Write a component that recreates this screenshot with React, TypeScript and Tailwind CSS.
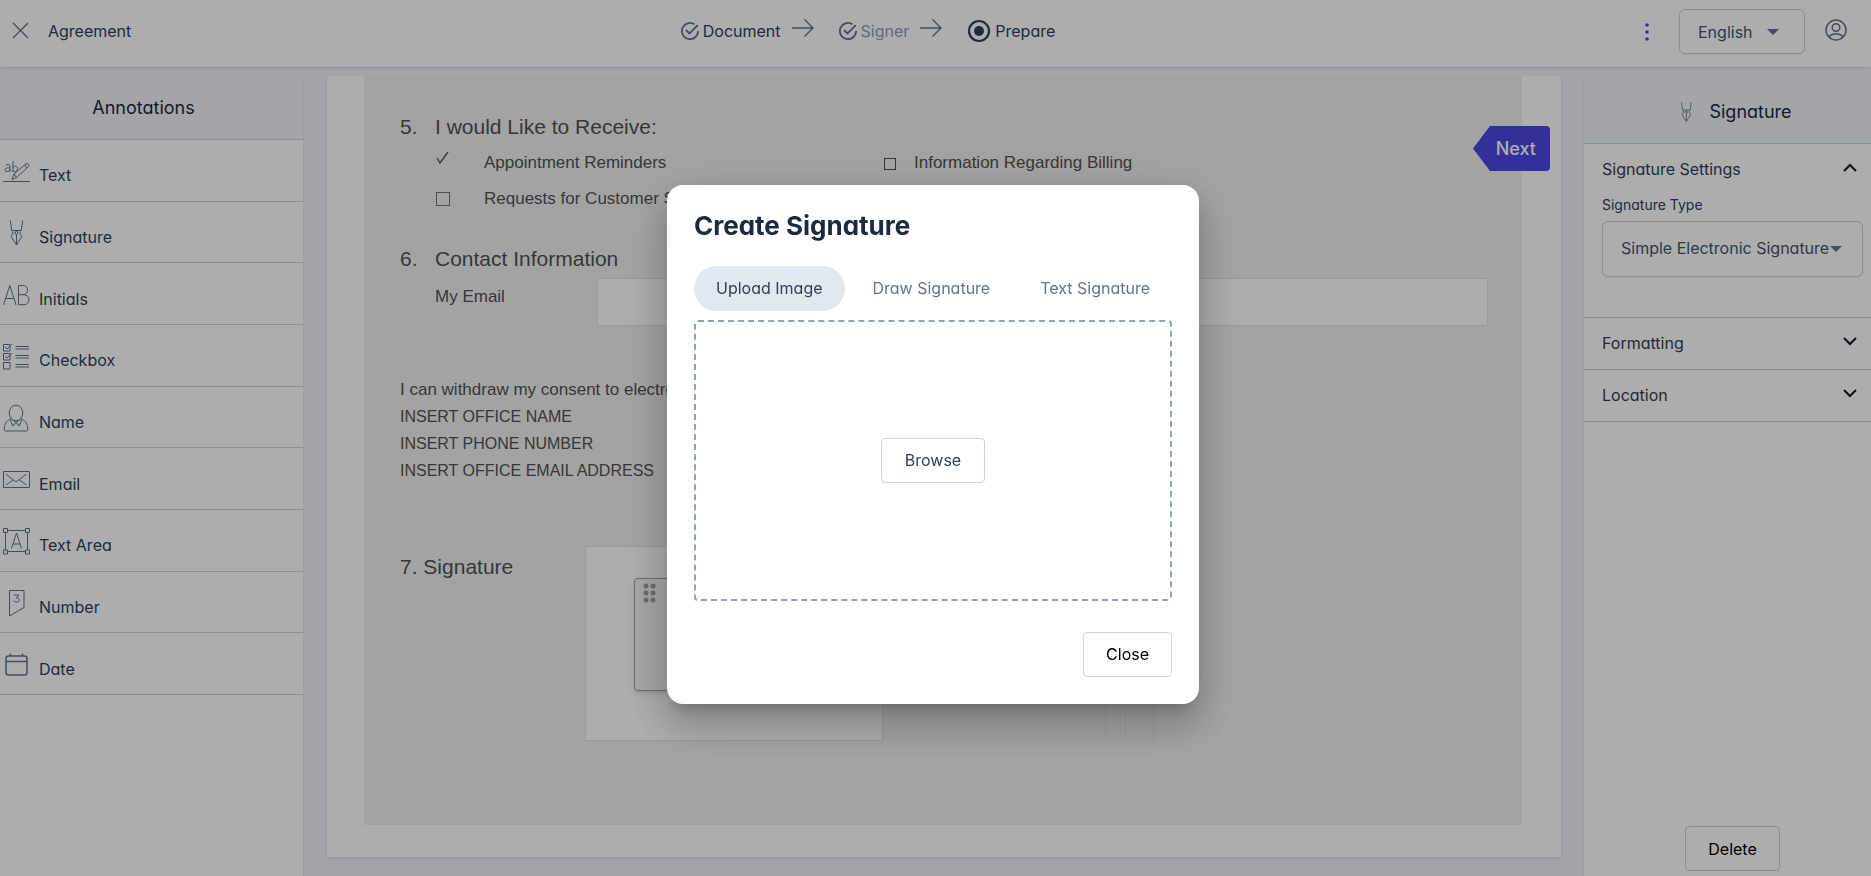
import React from 'react';

type IconProps = { className?: string };

const Svg = ({ className, size = 28, children }: { className?: string; size?: number; children: React.ReactNode }) => (
  <svg
    className={className}
    width={size}
    height={size}
    viewBox="0 0 28 28"
    fill="none"
    stroke="currentColor"
    strokeWidth="1"
    aria-hidden="true"
  >
    {children}
  </svg>
);

const TextIcon = () => (
  <Svg>
    <path d="M1 24.5H28" />
    <path d="M4 8q3-2 4 1v6M8 11c-4-.5-5.500 1-5 2.500s4 1.500 5-.5M11 4v11M11 10.500c2-2.500 5-1 4.500 1.800s-3.500 3.200-4.500 1" />
    <path d="M10 22.500l2-5.500L24 6.800c2-1 3.500 1 2.500 2.700L14.500 20.500zM12 17l2.500 3.500M22.500 8l2.500 3" />
  </Svg>
);

const NibIcon = ({ className, size }: IconProps & { size?: number }) => (
  <Svg className={className} size={size}>
    <path d="M8.300 1.500l1.400 10M20.700 1.500l-1.400 10M9.200 11.500h10.600" />
    <path d="M11 12.500c0 2-1 3.500-1.800 5l5.300 8.500 5.300-8.500c-.8-1.500-1.800-3-1.800-5M14.500 15.500v10.500" />
    <circle cx="14.500" cy="14" r="1.500" />
  </Svg>
);

const InitialsIcon = () => (
  <Svg>
    <path d="M1.500 24L7.800 4.500 14 24M3.800 17.500h8" />
    <path d="M16.500 4.500v19.200H22a5 5 0 0 0 0-10h-5.500M16.500 4.500H21a4.500 4.500 0 0 1 0 9.200" />
  </Svg>
);

const CheckboxIcon = () => (
  <Svg>
    <path d="M1.500 2.500h6.500v6.500H1.500zM1.500 11.500h6.500v6.500H1.500zM1.500 20.500h6.500v6.500H1.500z" />
    <path d="M3 5l2 2 5-5M3 14l2 2 5-5" />
    <path d="M13.500 4.500H27M13.500 7H27M13.500 13.500H27M13.500 16H27M13.500 22.500H27M13.500 25H27" />
  </Svg>
);

const NameIcon = () => (
  <Svg>
    <ellipse cx="14" cy="9" rx="6.800" ry="7.800" />
    <path d="M9.500 14.500C4 17 2.500 20 2.200 25c0 1.500 1 2 2.500 2h18.600c1.500 0 2.500-.5 2.500-2-.3-5-1.800-8-7.300-10.500" />
    <path d="M8 15.500l3 6.500 3-4 3 4 3-6.500M10 15.500l4 2.800 4-2.800" />
  </Svg>
);

const EmailIcon = () => (
  <Svg>
    <path d="M1.500 5.500h26v16h-26z" />
    <path d="M4 8l8.500 7q1.500 1 3 0L24.500 8M4 19l7-5M24.500 19l-7-5" />
  </Svg>
);

const TextAreaIcon = () => (
  <Svg>
    <path d="M6 3.500h17M6 24.500h17M3.500 6v17M25.500 6v17" />
    <path d="M1.500 1.500h4v4h-4zM23.500 1.500h4v4h-4zM1.500 23h4v4h-4zM23.500 23h4v4h-4z" />
    <path d="M9.500 21.500l5-15.500 5 15.500M11 17h7" />
  </Svg>
);

const NumberIcon = () => (
  <Svg>
    <path d="M7.500 1.500h14.500v17L7.500 27z" />
    <path d="M12 6h5l-2.800 3c4-.5 4 4 .5 4-1.500 0-2.500-.5-3-1.500" />
  </Svg>
);

const DateIcon = () => (
  <Svg>
    <rect x="4" y="5" width="21" height="19" rx="2.500" strokeWidth="1.500" />
    <path d="M4 10.500h21M8.500 2.500V5M20.500 2.500V5" strokeWidth="1.500" />
  </Svg>
);

const annotations = [
  { label: 'Text', Icon: TextIcon },
  { label: 'Signature', Icon: NibIcon },
  { label: 'Initials', Icon: InitialsIcon },
  { label: 'Checkbox', Icon: CheckboxIcon },
  { label: 'Name', Icon: NameIcon },
  { label: 'Email', Icon: EmailIcon },
  { label: 'Text Area', Icon: TextAreaIcon },
  { label: 'Number', Icon: NumberIcon },
  { label: 'Date', Icon: DateIcon },
];

const StepDone = () => (
  <svg width="18" height="18" viewBox="0 0 18 18" fill="none" stroke="currentColor" strokeWidth="1.800" className="text-slate-500" aria-hidden="true">
    <path d="M13.500 2.300A8.100 8.100 0 1 0 17.100 9" />
    <path d="M5 8l3.500 3.500L16.800 3.200" />
  </svg>
);

const StepArrow = () => (
  <svg width="24" height="20" viewBox="0 0 24 20" fill="none" stroke="currentColor" strokeWidth="1.400" className="mb-1.5 text-slate-500" aria-hidden="true">
    <path d="M1 10h21M13.500 1.500L22 10l-8.500 8.500" />
  </svg>
);

const StepCurrent = () => (
  <svg width="24" height="24" viewBox="0 0 24 24" fill="none" className="text-slate-700" aria-hidden="true">
    <circle cx="12" cy="12" r="10" stroke="currentColor" strokeWidth="2.200" />
    <circle cx="12" cy="12" r="5" fill="currentColor" />
  </svg>
);

const Caret = ({ className }: IconProps) => (
  <svg width="12" height="6" viewBox="0 0 12 6" className={className} aria-hidden="true">
    <path d="M0 0h12L6 6z" fill="currentColor" />
  </svg>
);

const Chevron = ({ open }: { open?: boolean }) => (
  <svg width="14" height="10" viewBox="0 0 14 10" fill="none" stroke="currentColor" strokeWidth="2" className="mb-1 text-slate-900" aria-hidden="true">
    <path d={open ? 'M1 8l6-6 6 6' : 'M1 2l6 6 6-6'} />
  </svg>
);

function Header() {
  return (
    <header className="relative z-10 grid h-[67px] shrink-0 grid-cols-[1fr_auto_1fr] items-center bg-white pb-1 shadow">
      <div className="flex items-center pb-0.5 pl-3">
        <button type="button" aria-label="Close document" className="text-slate-500">
          <svg width="17" height="17" viewBox="0 0 17 17" fill="none" stroke="currentColor" strokeWidth="1.400" aria-hidden="true">
            <path d="M1 1l15 15M16 1L1 16" />
          </svg>
        </button>
        <h1 className="ml-[19px] text-slate-700">Agreement</h1>
      </div>
      <ol className="mr-[135px] flex items-center pb-0.5 text-slate-700">
        <li className="flex items-center gap-1"><StepDone />Document</li>
        <li className="mr-6 ml-2.5 flex"><StepArrow /></li>
        <li className="flex items-center gap-1"><StepDone /><span className="text-slate-400">Signer</span></li>
        <li className="mr-6 ml-2.5 flex"><StepArrow /></li>
        <li className="flex items-center gap-1"><StepCurrent />Prepare</li>
      </ol>
      <div className="flex items-center justify-end pr-6">
        <button type="button" aria-label="More options" className="mr-[30px] text-[#4f46e5]">
          <svg width="4" height="18" viewBox="0 0 4 18" fill="currentColor" aria-hidden="true">
            <circle cx="2" cy="2" r="1.800" /><circle cx="2" cy="9" r="1.800" /><circle cx="2" cy="16" r="1.800" />
          </svg>
        </button>
        <div className="relative">
          <select aria-label="Language" className="h-[45px] w-[126px] appearance-none rounded-md border border-slate-300 bg-white pl-[18px] text-slate-600 shadow-xs">
            <option>English</option>
          </select>
          <Caret className="pointer-events-none absolute top-5 right-[26px] text-slate-500" />
        </div>
        <button type="button" aria-label="Account" className="mb-1 ml-5 text-slate-500">
          <svg width="22" height="22" viewBox="0 0 22 22" fill="none" stroke="currentColor" strokeWidth="1.500" aria-hidden="true">
            <circle cx="11" cy="11" r="10" />
            <circle cx="11" cy="8.500" r="3.800" />
            <path d="M3.800 17.800c4-4 10.400-4 14.400 0" />
          </svg>
        </button>
      </div>
    </header>
  );
}

function AnnotationsPanel() {
  return (
    <aside className="mt-[9px] flex w-[303px] shrink-0 flex-col bg-white shadow">
      <h2 className="flex h-16 shrink-0 items-center justify-center border-b border-slate-300 bg-[#f1f3f9] pr-4 text-lg text-slate-800">
        Annotations
      </h2>
      <ul className="grid h-[555px] shrink-0 auto-rows-fr">
        {annotations.map(({ label, Icon }) => (
          <li key={label} className="flex border-b border-slate-300">
            <button type="button" className="flex w-full items-center pt-0.5 pl-0.5 text-slate-700">
              <span className="text-slate-500"><Icon /></span>
              <span className="mt-2 ml-[9px]">{label}</span>
            </button>
          </li>
        ))}
      </ul>
    </aside>
  );
}

function DocumentPage() {
  return (
    <main className="relative mt-[9px] min-w-0 flex-1 overflow-hidden pr-[23px] pl-6">
      <div className="bg-white pr-[39px] pb-8 pl-[37px] shadow">
        <div className="h-[749px] bg-[#f1f1f1] pt-9 pr-[34px] pl-9 font-['Liberation_Sans',Arial,sans-serif] text-[17px] leading-[26px] text-neutral-600">
          <h3 className="flex h-[30px] items-center text-[21px]"><span className="w-[35px]">5.</span>I would Like to Receive:</h3>
          <div className="grid grid-cols-[36px_48px_400px_30px_1fr] pt-2">
            <span />
            <svg width="14" height="16" viewBox="0 0 14 16" fill="none" stroke="currentColor" aria-hidden="true">
              <path d="M1 8l3 5L12 2" strokeWidth="1.300" />
            </svg>
            <span>Appointment Reminders</span>
            <input type="checkbox" aria-label="Information Regarding Billing" className="mt-2 size-3 appearance-none border border-neutral-600" />
            <span>Information Regarding Billing</span>
          </div>
          <div className="grid grid-cols-[36px_48px_1fr] pt-2.5">
            <span />
            <input type="checkbox" aria-label="Requests for Customer Service" className="mt-1.5 size-3.5 appearance-none border border-neutral-500" />
            <span>Requests for Customer Service</span>
          </div>
          <h3 className="mt-8 flex h-[30px] items-center text-[21px]"><span className="w-[35px]">6.</span>Contact Information</h3>
          <div className="mt-1 flex pl-[35px]">
            <label htmlFor="email" className="w-[162px] pt-1.5">My Email</label>
            <input id="email" type="text" className="h-12 min-w-0 flex-1 border border-neutral-200 bg-white" />
          </div>
          <div className="mt-[50px] text-base leading-[27px]">
            <p className="text-[17px]">I can withdraw my consent to electronic delivery at any time by contacting</p>
            <p>INSERT OFFICE NAME</p>
            <p>INSERT PHONE NUMBER</p>
            <p>INSERT OFFICE EMAIL ADDRESS</p>
          </div>
          <div className="mt-[62px] flex">
            <h3 className="w-[185px] pt-1.5 text-[21px] leading-[30px]">7. Signature</h3>
            <div className="h-[195px] w-[298px] border border-neutral-200 bg-white pt-[31px] pl-12">
              <div className="h-[113px] w-[200px] rounded border border-neutral-400 bg-[#f6f6f6] shadow-md">
                <svg width="14" height="20" viewBox="0 0 14 20" className="mt-1 ml-2 fill-neutral-400" aria-hidden="true">
                  <circle cx="3" cy="3" r="2.500" /><circle cx="10" cy="3" r="2.500" />
                  <circle cx="3" cy="10" r="2.500" /><circle cx="10" cy="10" r="2.500" />
                  <circle cx="3" cy="17" r="2.500" /><circle cx="10" cy="17" r="2.500" />
                </svg>
              </div>
            </div>
            <div className="ml-[222px] w-[21px] border-x border-neutral-200" />
            <div className="w-7 border-r border-neutral-200" />
          </div>
        </div>
      </div>
      <button type="button" className="absolute top-[50px] right-[34px] flex h-[45px] items-center text-lg font-medium text-white">
        <svg width="17" height="45" viewBox="0 0 17 45" className="fill-[#4f46e5]" aria-hidden="true">
          <path d="M17 0v45L0 22.500z" />
        </svg>
        <span className="flex h-full items-center rounded-r bg-[#4f46e5] pr-3.5 pl-1.5">Next</span>
      </button>
    </main>
  );
}

function SettingsPanel() {
  return (
    <aside className="mt-[9px] flex w-[287px] shrink-0 flex-col bg-white text-slate-700 shadow">
      <h2 className="flex h-[68px] shrink-0 items-center justify-center gap-3 border-b border-slate-300 bg-[#f1f3f9] pt-1 pl-3 text-lg text-slate-800">
        <NibIcon className="text-slate-500" size={22} />
        Signature
      </h2>
      <section className="h-[174px] border-b border-slate-300 pt-3 pr-2 pl-[18px]">
        <button type="button" className="flex w-full items-center justify-between pr-1.5 leading-[27px]">
          Signature Settings<Chevron open />
        </button>
        <label htmlFor="signature-type" className="mt-3 block text-sm leading-5">Signature Type</label>
        <div className="relative mt-1.5">
          <select id="signature-type" className="h-14 w-full appearance-none rounded-md border border-slate-300 bg-white pb-0.5 pl-[18px] text-slate-600 shadow-xs">
            <option>Simple Electronic Signature</option>
          </select>
          <Caret className="pointer-events-none absolute top-[25px] right-[21px] text-slate-500" />
        </div>
      </section>
      {['Formatting', 'Location'].map((label) => (
        <button key={label} type="button" className="flex h-[52px] items-center justify-between border-b border-slate-300 pr-3.5 pb-0.5 pl-[18px]">
          {label}<Chevron />
        </button>
      ))}
      <div className="mt-auto flex justify-center pb-[5px] pl-2.5">
        <button type="button" className="h-[45px] rounded border border-slate-300 px-[22px] text-black">Delete</button>
      </div>
    </aside>
  );
}

function SignatureDialog() {
  return (
    <div className="fixed inset-0 z-20 flex items-center justify-center bg-black/32 pt-[13px] pr-[5px]">
      <div
        role="dialog"
        aria-modal="true"
        aria-labelledby="dialog-title"
        className="w-[532px] rounded-2xl bg-white p-[27px] pt-[25px] shadow-[0_11px_15px_-7px_rgba(0,0,0,0.2),0_24px_38px_3px_rgba(0,0,0,0.14),0_9px_46px_8px_rgba(0,0,0,0.12)]"
      >
        <h2 id="dialog-title" className="text-[26px] leading-8 font-bold text-slate-800">Create Signature</h2>
        <div role="tablist" className="mt-6 flex justify-between text-slate-500">
          <button type="button" role="tab" aria-selected="true" className="h-[45px] rounded-full bg-slate-200 px-[22px] pb-0.5 text-slate-700">Upload Image</button>
          <button type="button" role="tab" aria-selected="false" className="h-[45px] rounded-full px-[22px] pb-0.5">Draw Signature</button>
          <button type="button" role="tab" aria-selected="false" className="h-[45px] rounded-full px-[22px] pb-0.5">Text Signature</button>
        </div>
        <div className="mt-[9px] flex h-[281px] items-center justify-center rounded border-2 border-dashed border-slate-400">
          <button type="button" className="h-[45px] rounded border border-slate-300 bg-white px-[23px] pb-0.5 text-slate-700">Browse</button>
        </div>
        <div className="mt-[31px] flex justify-end">
          <button type="button" className="h-[45px] rounded border border-slate-300 bg-white px-[22px] pb-0.5 text-black">Close</button>
        </div>
      </div>
    </div>
  );
}

export default function App() {
  return (
    <div className="flex h-screen flex-col overflow-hidden bg-[#f1f3f9] font-[Inter,'Noto_Sans',sans-serif] text-base [font-feature-settings:'cv11']">
      <Header />
      <div className="flex min-h-0 flex-1">
        <AnnotationsPanel />
        <DocumentPage />
        <SettingsPanel />
      </div>
      <SignatureDialog />
    </div>
  );
}
